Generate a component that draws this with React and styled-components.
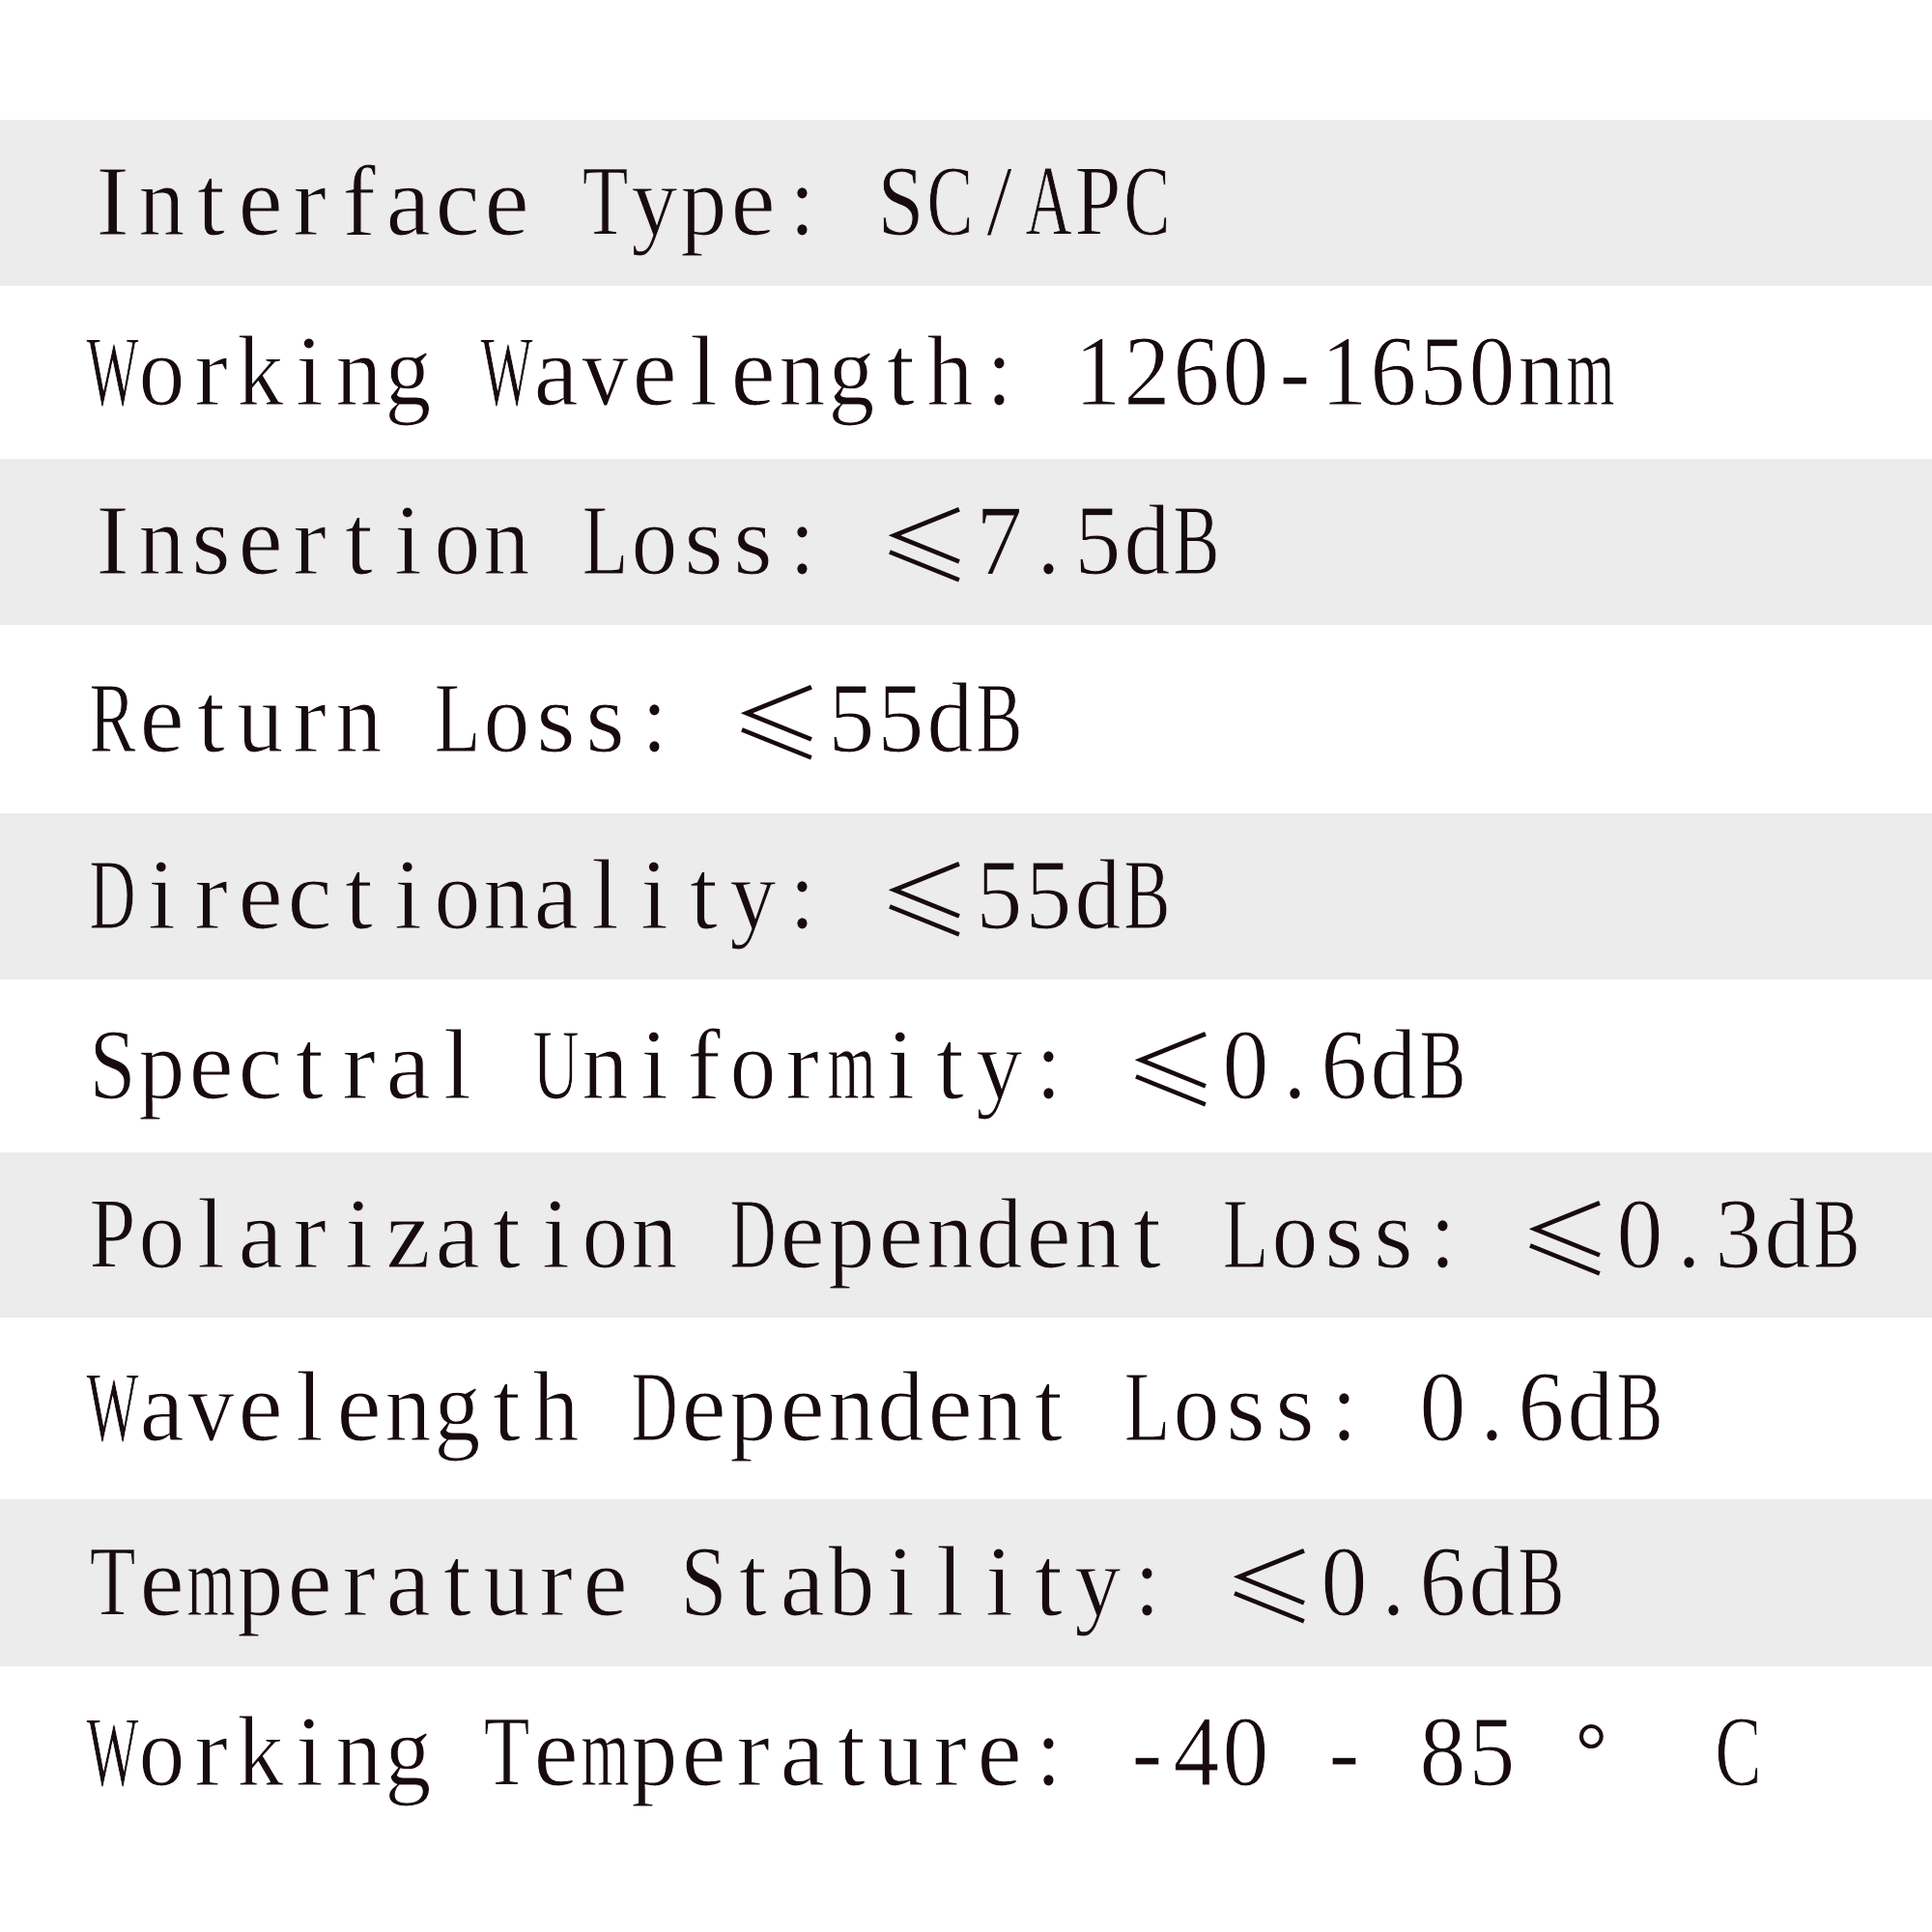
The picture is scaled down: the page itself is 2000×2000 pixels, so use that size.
import React from 'react';
import styled, { createGlobalStyle } from 'styled-components';

const GlobalStyle = createGlobalStyle`
  html, body {
    margin: 0;
    padding: 0;
    background: #ffffff;
  }
`;

const Sheet = styled.div`
  width: 2000px;
  height: 2000px;
  box-sizing: border-box;
  padding-top: 124px;
  background: #ffffff;
  overflow: hidden;
`;

const SpecRow = styled.div`
  display: flex;
  align-items: center;
  height: ${({ $h }) => $h}px;
  padding-left: 91px;
  background: ${({ $bg }) => $bg};
`;

const SpecText = styled.div`
  display: flex;
  margin-bottom: 4px;
  font-family: "Liberation Serif", "DejaVu Serif", serif;
  font-size: 104px;
  line-height: 1;
  color: #180b0e;
  white-space: pre;
  /* thin the strokes a little, the original face is lighter than Times */
  -webkit-text-stroke: 1.1px ${({ $bg }) => $bg};
`;

// every glyph sits in a half-width cell, full-width symbols in two cells
const Cell = styled.span`
  display: inline-flex;
  justify-content: center;
  flex: none;
  width: ${({ $wide }) => ($wide ? 102 : 51)}px;
  transform: scaleX(${({ $sx }) => $sx});
`;

const LessEq = styled(Cell)`
  font-family: "Noto Sans CJK SC", "DejaVu Sans", sans-serif;
  font-size: 96px;
  font-weight: 300;
  line-height: 104px;
  -webkit-text-stroke: 0;
`;

const Degree = styled(Cell)`
  justify-content: flex-start;
  padding-left: 10px;
  box-sizing: border-box;
  font-size: 82px;
  line-height: 104px;
  -webkit-text-stroke: 0;
`;

// Times advance widths (em), used to squeeze wide letters into a cell
const ADV = {
  A: 0.722, B: 0.667, C: 0.667, D: 0.722, I: 0.333, L: 0.611, P: 0.556,
  R: 0.667, S: 0.556, T: 0.611, U: 0.722, W: 0.84,
  a: 0.444, b: 0.5, c: 0.444, d: 0.5, e: 0.444, f: 0.333, g: 0.5, h: 0.5,
  i: 0.278, k: 0.5, l: 0.278, m: 0.74, n: 0.5, o: 0.5, p: 0.5, r: 0.333,
  s: 0.389, t: 0.278, u: 0.5, v: 0.5, y: 0.5, z: 0.444,
};

const squeeze = (ch) => Math.min(1, 0.46 / (ADV[ch] || 0.5)).toFixed(2);

const specs = [
  { text: 'Interface Type: SC/APC', h: 172 },
  { text: 'Working Wavelength: 1260-1650nm', h: 179 },
  { text: 'Insertion Loss: ≤7.5dB', h: 172 },
  { text: 'Return Loss: ≤55dB', h: 195 },
  { text: 'Directionality: ≤55dB', h: 172 },
  { text: 'Spectral Uniformity: ≤0.6dB', h: 179 },
  { text: 'Polarization Dependent Loss: ≤0.3dB', h: 171 },
  { text: 'Wavelength Dependent Loss: 0.6dB', h: 188 },
  { text: 'Temperature Stability: ≤0.6dB', h: 173 },
  { text: 'Working Temperature: -40 - 85 ° C', h: 179 },
];

const renderText = (text) =>
  Array.from(text).map((ch, i) => {
    if (ch === '≤') return <LessEq key={i} $wide $sx={1}>≤</LessEq>;
    if (ch === '°') return <Degree key={i} $wide $sx={1}>°</Degree>;
    return (
      <Cell key={i} $sx={squeeze(ch)}>
        {ch}
      </Cell>
    );
  });

export default function App() {
  return (
    <>
      <GlobalStyle />
      <Sheet>
        {specs.map((s, i) => {
          const bg = i % 2 === 0 ? '#ececec' : '#ffffff';
          return (
            <SpecRow key={s.text} $h={s.h} $bg={bg}>
              <SpecText $bg={bg} aria-label={s.text}>
                {renderText(s.text)}
              </SpecText>
            </SpecRow>
          );
        })}
      </Sheet>
    </>
  );
}
